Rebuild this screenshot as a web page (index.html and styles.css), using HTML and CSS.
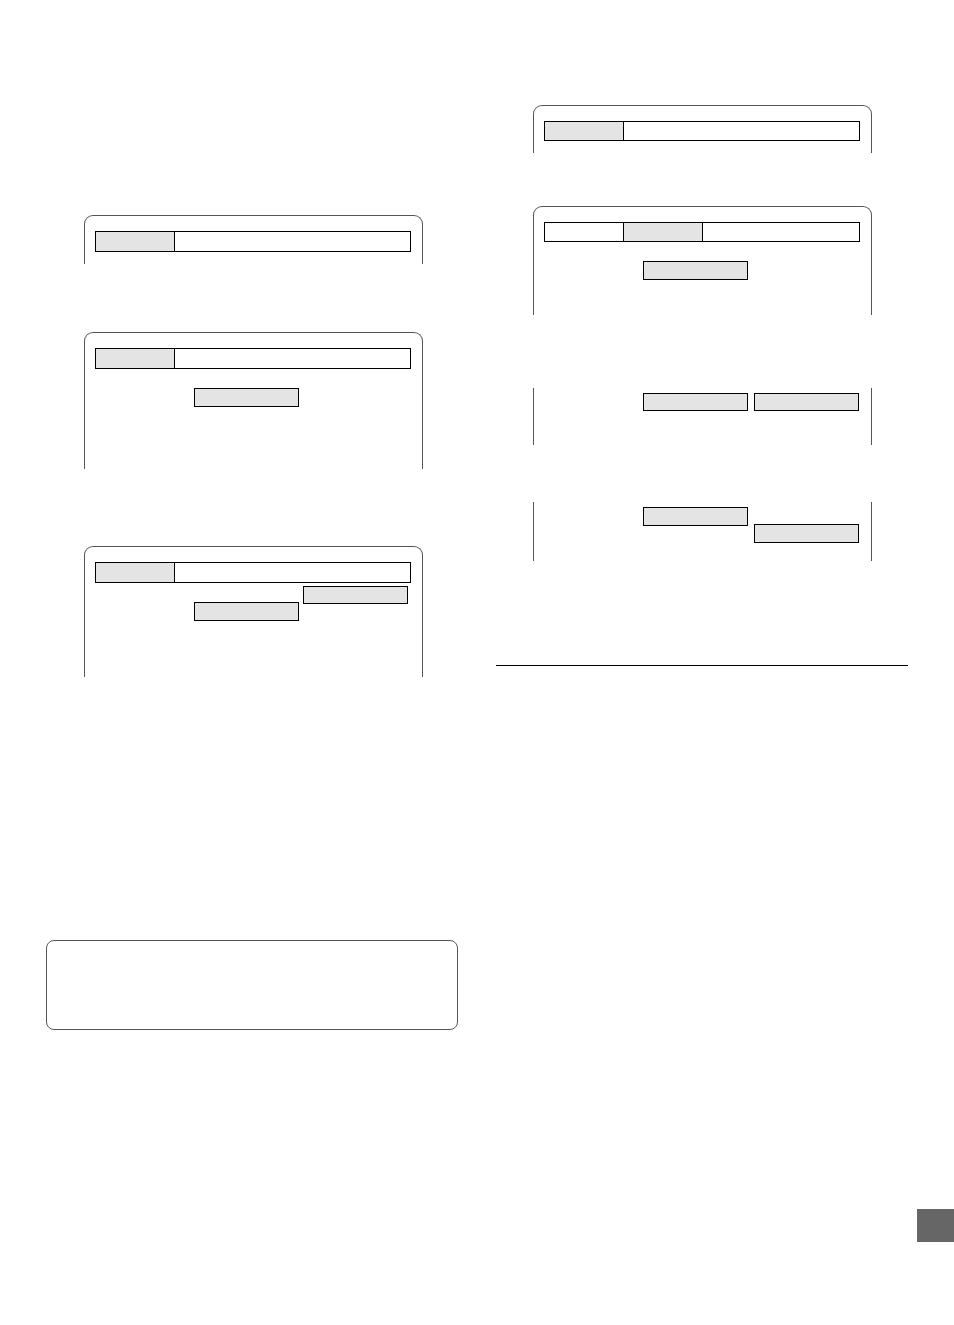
FILE: index.html
```html
<!DOCTYPE html>
<html lang="en">

<head>
    <meta charset="UTF-8" />
    <meta name="viewport" content="width=device-width, initial-scale=1.0" />
    <title>On-screen menus</title>
    <link rel="stylesheet" href="styles.css">
</head>

<body>
    <main class="columns">
        <section class="column column-left">
            <div class="screen">
                <div class="menu-bar"><span class="tab active"></span></div>
            </div>

            <div class="screen screen-large">
                <div class="menu-bar"><span class="tab active"></span></div>
                <div class="options">
                    <span class="option"></span>
                </div>
            </div>

            <div class="screen screen-submenu">
                <div class="menu-bar"><span class="tab active"></span></div>
                <div class="options">
                    <span class="option"></span>
                    <span class="option short raised"></span>
                </div>
            </div>

            <div class="note"></div>
        </section>

        <section class="column column-right">
            <div class="screen">
                <div class="menu-bar"><span class="tab active"></span></div>
            </div>

            <div class="screen screen-medium">
                <div class="menu-bar"><span class="tab"></span><span class="tab active"></span></div>
                <div class="options">
                    <span class="option"></span>
                </div>
            </div>

            <!-- middle parts of a screen, no top edge -->
            <div class="screen partial">
                <div class="options">
                    <span class="option short"></span>
                    <span class="option short"></span>
                </div>
            </div>

            <div class="screen partial partial-last">
                <div class="options">
                    <span class="option"></span>
                    <span class="option lowered"></span>
                </div>
            </div>

            <hr class="divider">
        </section>
    </main>

    <footer class="page-footer">
        <div class="page-tab"></div>
    </footer>
</body>

</html>
```

FILE: styles.css
```css
* {
    box-sizing: border-box;
}

body {
    margin: 0;
    background-color: #fff;
    font-family: "Liberation Sans", Arial, sans-serif;
}

.columns {
    display: grid;
    grid-template-columns: 1fr 1fr;
    gap: 38px;
    padding: 0 46px;
}

.column {
    display: flex;
    flex-direction: column;
}

.column-left {
    --bar-height: 21px;
    --option-gap: 4px;
    --option-end: 3px;
    padding-top: 215px;
}

.column-right {
    --bar-height: 20px;
    --option-gap: 6px;
    --option-end: 1px;
    padding-top: 105px;
}

/* Screens */
.screen {
    min-height: 48px;
    padding: 15px 11px 0 10px;
    border: 1px solid #555;
    border-bottom: 0;
    border-radius: 9px 9px 0 0;
}

.column-left .screen {
    min-height: 49px;
    margin: 0 35px 0 38px;
}

.column-right .screen {
    margin: 0 36px 0 37px;
}

.column-left .screen-large {
    min-height: 137px;
    margin-top: 68px;
}

.column-left .screen-submenu {
    min-height: 131px;
    margin-top: 77px;
}

.column-right .screen-medium {
    min-height: 109px;
    margin-top: 53px;
}

.column-right .partial {
    min-height: 57px;
    margin-top: 73px;
    padding-top: 5px;
    border-top: 0;
    border-radius: 0;
}

.column-right .partial-last {
    min-height: 59px;
    margin-top: 57px;
}

.menu-bar {
    display: flex;
    height: var(--bar-height);
    border: 1px solid #000;
}

.tab {
    width: 79px;
    border-right: 1px solid #000;
}

.tab.active {
    background-color: #e4e4e4;
}

.options {
    display: grid;
    grid-template-columns: 1fr 105px 105px;
    column-gap: var(--option-gap);
    align-items: start;
    padding: 19px var(--option-end) 0 0;
}

.partial .options {
    padding-top: 0;
}

.option {
    height: 19px;
    border: 1px solid #000;
    background-color: #e4e4e4;
}

.option:first-child {
    grid-column: 2;
}

.option.short {
    height: 18px;
}

.option.raised {
    margin-top: -16px;
}

.option.lowered {
    margin-top: 17px;
}

.note {
    height: 90px;
    margin-top: 263px;
    border: 1px solid #555;
    border-radius: 8px;
}

.divider {
    width: 100%;
    margin: 104px 0 0;
    border: 0;
    border-top: 1px solid #000;
}

.page-footer {
    display: flex;
    justify-content: flex-end;
    padding: 179px 0 83px;
}

.page-tab {
    width: 37px;
    height: 33px;
    background-color: #666;
}
```
